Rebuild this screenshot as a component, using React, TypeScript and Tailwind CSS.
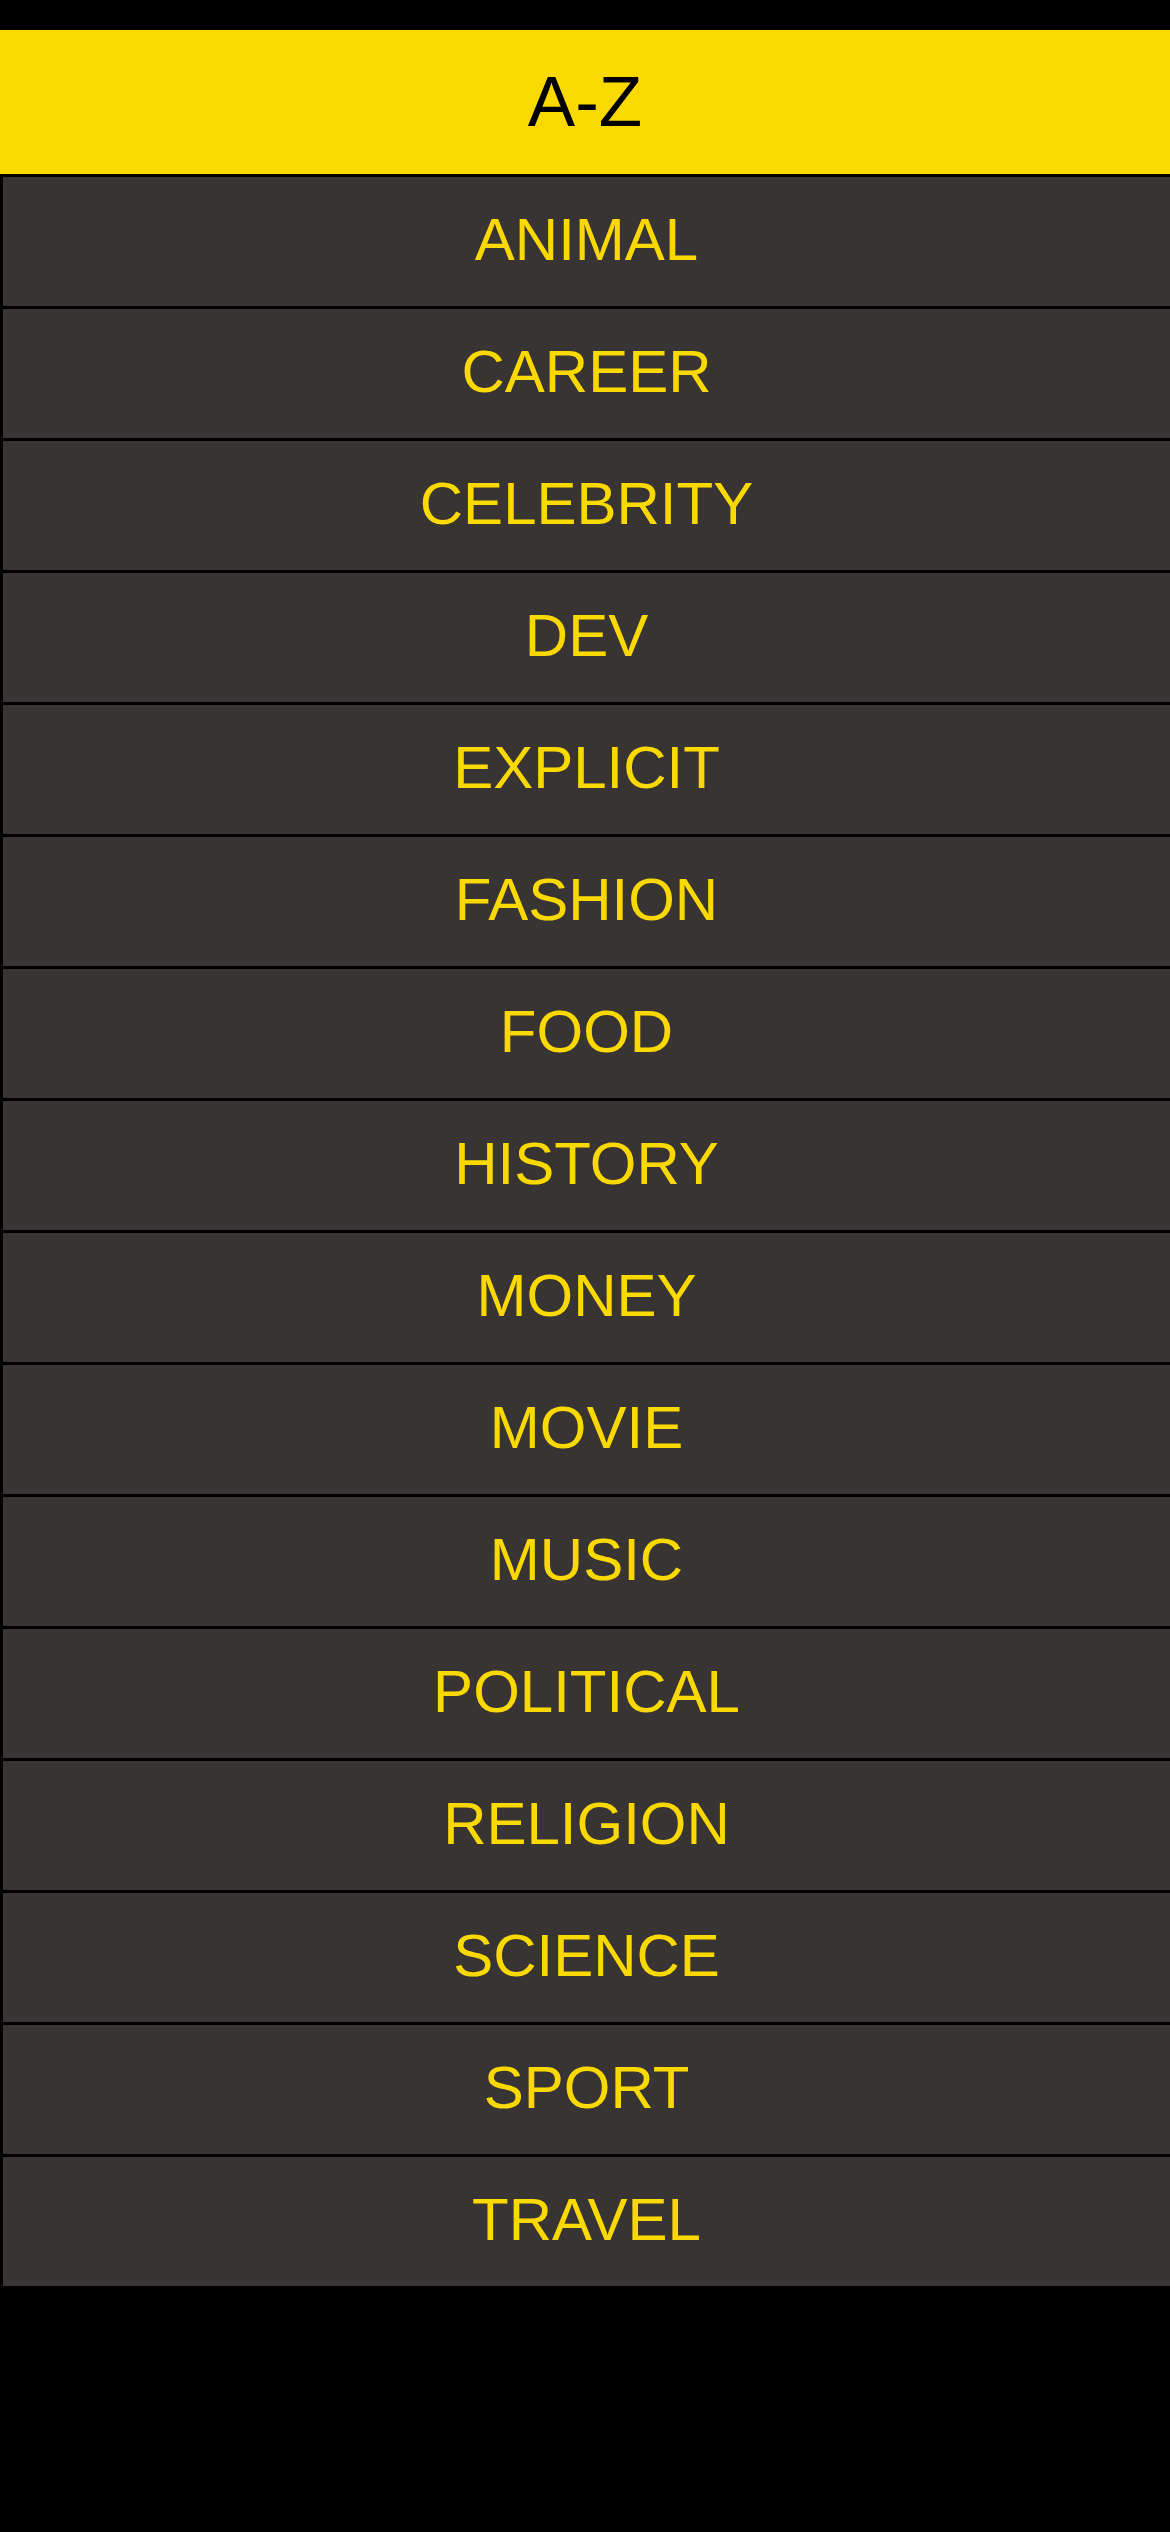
const categories = [
  "ANIMAL",
  "CAREER",
  "CELEBRITY",
  "DEV",
  "EXPLICIT",
  "FASHION",
  "FOOD",
  "HISTORY",
  "MONEY",
  "MOVIE",
  "MUSIC",
  "POLITICAL",
  "RELIGION",
  "SCIENCE",
  "SPORT",
  "TRAVEL",
];

function App() {
  return (
    <div className="min-h-[2532px] w-full bg-black font-['Liberation_Sans',Arial,sans-serif]">
      <div className="h-[30px] bg-black" />
      <div className="flex h-[144px] items-center justify-center bg-[#fad900] pb-[2px]">
        <span className="text-[71px] leading-none text-black">A-Z</span>
      </div>
      <div className="flex flex-col gap-[3px] pl-[3px] pt-[3px]">
        {categories.map((c) => (
          <div
            key={c}
            className="flex h-[129px] items-center justify-center bg-[#393434] pb-[4px]"
          >
            <span className="text-[60px] leading-none text-[#fad900]">{c}</span>
          </div>
        ))}
      </div>
    </div>
  );
}

export default App;
